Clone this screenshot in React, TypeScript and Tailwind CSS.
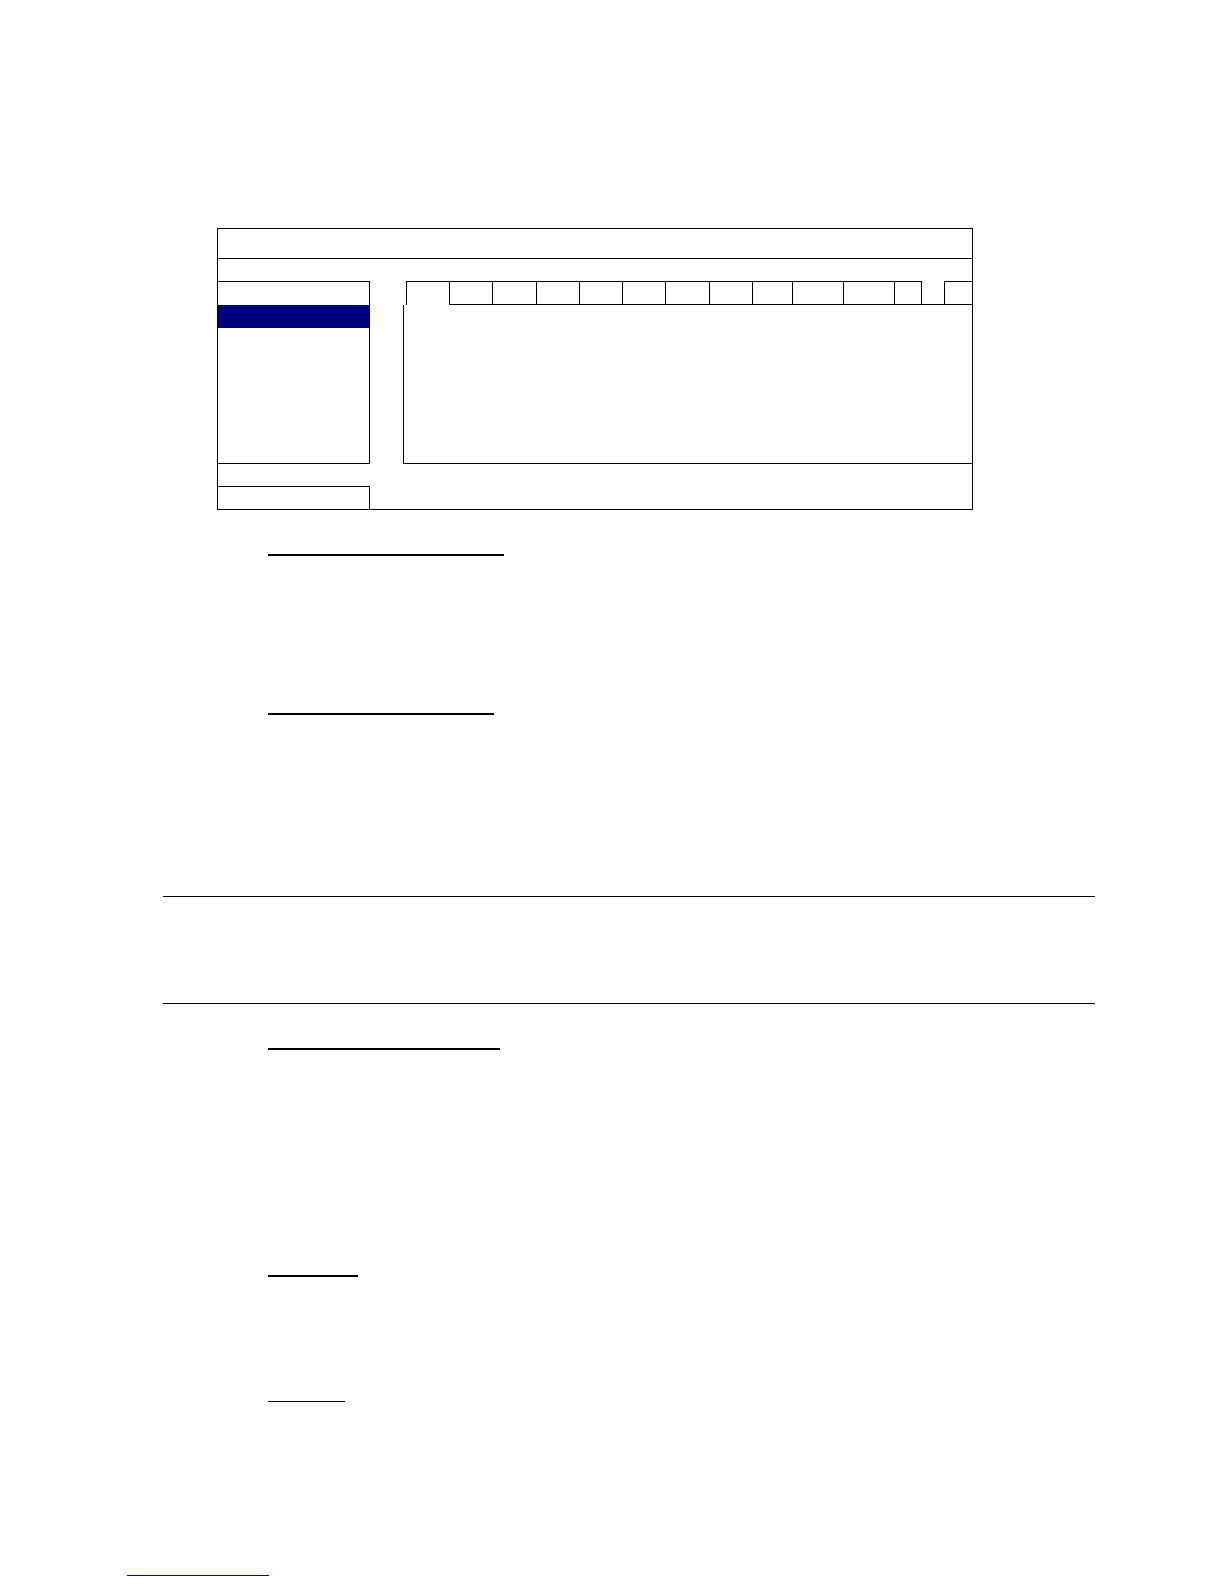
import React from "react";

const tabWidths = [43, 44, 43, 43, 43, 44, 43, 40, 51, 51, 27];

export default function App() {
  return (
    <div className="w-[1224px] h-[1584px] bg-white overflow-hidden flex flex-col" style={{ fontFamily: '"Liberation Sans", Arial, sans-serif' }}>
      {/* Dialog mock-up */}
      <div className="mt-[228px] ml-[217px] w-[756px] h-[282px] border border-black flex flex-col">
        <div className="h-[30px] border-b border-black shrink-0" />
        <div className="h-[22px] shrink-0" />
        <div className="h-[183px] shrink-0 flex">
          <div className="w-[152px] h-full border-t border-r border-b border-black flex flex-col">
            <div className="h-[23px]" />
            <div className="h-[23px] bg-[#000080] -mr-px" />
          </div>
          <div className="ml-[33px] flex-1 flex flex-col">
            <div className="h-[24px] flex pl-[3px] shrink-0">
              <div className="w-[44px] h-full border-l border-t border-r border-black" />
              {tabWidths.map((w, i) => (
                <div
                  key={i}
                  className="h-full border-t border-r border-b border-black"
                  style={{ width: w }}
                />
              ))}
              <div className="w-[22px] h-full border-b border-black" />
              <div className="flex-1 h-full border-l border-t border-b border-black" />
            </div>
            <div className="flex-1 border-l border-b border-black" />
          </div>
        </div>
        <div className="h-[22px] shrink-0" />
        <div className="w-[152px] flex-1 border-t border-r border-black" />
      </div>

      {/* Heading underlines */}
      <div className="mt-[44px] ml-[268px] w-[236px] h-[2px] bg-black" />
      <div className="mt-[157px] ml-[268px] w-[226px] h-[2px] bg-black" />

      {/* Note rules */}
      <div className="mt-[181px] ml-[163px] w-[932px] h-px bg-black" />
      <div className="mt-[106px] ml-[163px] w-[932px] h-px bg-black" />

      <div className="mt-[44px] ml-[268px] w-[232px] h-[2px] bg-black" />
      <div className="mt-[225px] ml-[268px] w-[90px] h-[2px] bg-black" />
      <div className="mt-[124px] ml-[268px] w-[77px] h-px bg-black" />

      {/* Footnote link line */}
      <div className="mt-[173px] ml-[127px] w-[142px] h-px bg-[#000099]" />
    </div>
  );
}
